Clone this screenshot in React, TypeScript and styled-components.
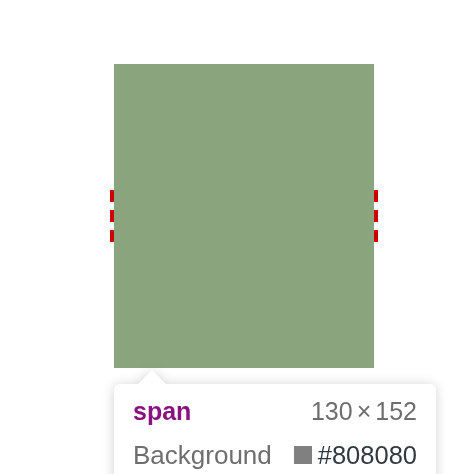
import React from 'react'
import styled, { createGlobalStyle } from 'styled-components'

const GlobalStyle = createGlobalStyle`
  html, body {
    margin: 0;
    padding: 0;
    background: #ffffff;
  }
  body {
    font-family: 'Liberation Sans', Arial, sans-serif;
  }
`

const Page = styled.div`
  width: 456px;
  height: 474px;
  overflow: hidden;
  padding: 64px 0 0 114px;
  box-sizing: border-box;
`

const Highlight = styled.div`
  position: relative;
  width: 260px;
  height: 304px;
  background: #8aa57e;
`

const DashGroup = styled.div<{ side: 'left' | 'right' }>`
  position: absolute;
  top: 126px;
  ${({ side }) => (side === 'left' ? 'left: -4px;' : 'right: -4px;')}
  display: flex;
  flex-direction: column;
  gap: 8px;
`

const Dash = styled.div`
  width: 4px;
  height: 12px;
  background: #cc0000;
`

const Tooltip = styled.div`
  position: relative;
  margin-top: 16px;
  width: 322px;
  filter: drop-shadow(0 1px 6px rgba(0, 0, 0, 0.18));
`

const Arrow = styled.div`
  position: absolute;
  top: -14px;
  left: 24px;
  width: 0;
  height: 0;
  border-left: 14px solid transparent;
  border-right: 14px solid transparent;
  border-bottom: 14px solid #ffffff;
`

const Body = styled.div`
  background: #ffffff;
  border-radius: 6px;
  padding: 12px 19px 20px 19px;
  display: flex;
  flex-direction: column;
  gap: 14px;
`

const Row = styled.div<{ size: number }>`
  display: flex;
  justify-content: space-between;
  align-items: center;
  font-size: ${({ size }) => size}px;
  line-height: 30px;
`

const TagName = styled.span`
  color: #881280;
  font-weight: bold;
`

const Muted = styled.span`
  color: #6e6e6e;
`

const Times = styled.span`
  margin: 0 4px;
`

const Value = styled.span`
  display: flex;
  align-items: center;
  gap: 6px;
  font-size: 25.5px;
  color: #303942;
`

const Swatch = styled.span<{ color: string }>`
  width: 18px;
  height: 18px;
  background: ${({ color }) => color};
`

export default function App() {
  return (
    <>
      <GlobalStyle />
      <Page>
        <Highlight>
          <DashGroup side="left">
            <Dash />
            <Dash />
            <Dash />
          </DashGroup>
          <DashGroup side="right">
            <Dash />
            <Dash />
            <Dash />
          </DashGroup>
        </Highlight>
        <Tooltip>
          <Arrow />
          <Body>
            <Row size={25}>
              <TagName>span</TagName>
              <Muted>
                130<Times>×</Times>152
              </Muted>
            </Row>
            <Row size={26}>
              <Muted>Background</Muted>
              <Value>
                <Swatch color="#808080" />
                #808080
              </Value>
            </Row>
          </Body>
        </Tooltip>
      </Page>
    </>
  )
}
